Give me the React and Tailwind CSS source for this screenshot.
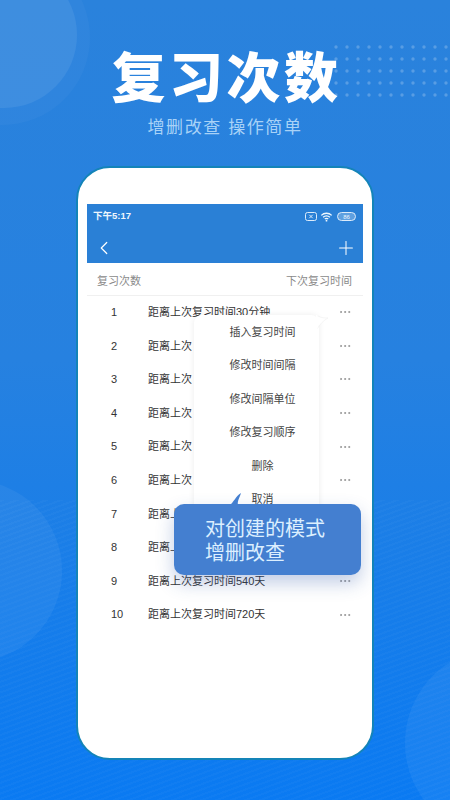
import { ChevronLeft, Plus, Ellipsis } from 'lucide-react';

const rows = [
  { n: 1, label: '距离上次复习时间30分钟' },
  { n: 2, label: '距离上次' },
  { n: 3, label: '距离上次' },
  { n: 4, label: '距离上次' },
  { n: 5, label: '距离上次' },
  { n: 6, label: '距离上次' },
  { n: 7, label: '距离上次' },
  { n: 8, label: '距离上次' },
  { n: 9, label: '距离上次复习时间540天' },
  { n: 10, label: '距离上次复习时间720天' },
];

const menu = ['插入复习时间', '修改时间间隔', '修改间隔单位', '修改复习顺序', '删除', '取消'];

function Dots() {
  const cols = Array.from({ length: 11 }, (_, i) => i);
  const lines = Array.from({ length: 5 }, (_, i) => i);
  return (
    <svg className="absolute left-[334px] top-[44px]" width="116" height="56" viewBox="0 0 116 56">
      {lines.map((y) =>
        cols.map((x) => (
          <circle key={`${x}-${y}`} cx={2 + x * 11} cy={3 + y * 12} r="1.7" fill="#ffffff" fillOpacity="0.22" />
        ))
      )}
    </svg>
  );
}

function StatusIcons() {
  return (
    <div className="flex items-center gap-[3px]">
      <svg width="12" height="9" viewBox="0 0 12 9" fill="none" stroke="#dcebfa" strokeWidth="1">
        <rect x="0.5" y="0.5" width="11" height="8" rx="2" />
        <path d="M4.3 2.8l3.4 3.4M7.7 2.8L4.3 6.2" />
      </svg>
      <svg width="13" height="10" viewBox="0 0 12 10" fill="none" stroke="#eef6fd" strokeWidth="1.3">
        <path d="M0.8 3.4a7.4 7.4 0 0 1 10.4 0M2.6 5.3a4.8 4.8 0 0 1 6.8 0M4.3 7a2.4 2.4 0 0 1 3.4 0" />
        <circle cx="6" cy="8.7" r="0.9" fill="#eef6fd" stroke="none" />
      </svg>
      <div className="ml-[1px] flex h-[9px] w-[19px] items-center justify-center rounded-[5px] border border-[#dcebfa] bg-white/25 text-[6px] leading-none text-[#eef6fd]">
        86
      </div>
    </div>
  );
}

export default function App() {
  return (
    <div className="relative h-[800px] w-[450px] overflow-hidden bg-[linear-gradient(180deg,#2a82dc_0%,#2681e0_45%,#0a7af2_100%)] font-['Liberation_Sans','Noto_Sans_CJK_SC',sans-serif]">
      {/* Background shapes */}
      <div className="absolute inset-x-0 bottom-0 h-[300px] bg-[repeating-linear-gradient(160deg,rgba(255,255,255,0.025)_0px,rgba(255,255,255,0.025)_2px,transparent_2px,transparent_5px)]" />
      <div className="absolute left-[-90px] top-[-50px] h-[175px] w-[180px] rounded-full bg-white/[0.03]" />
      <div className="absolute left-[-88px] top-[-38px] h-[146px] w-[165px] rounded-full bg-white/[0.07]" />
      <div className="absolute left-[-120px] top-[480px] h-[182px] w-[182px] rounded-full bg-white/5" />
      <div className="absolute left-[405px] top-[648px] h-[190px] w-[190px] rounded-full bg-white/5" />
      <Dots />

      {/* Heading */}
      <div className="relative flex flex-col items-center pt-[43px]">
        <h1 className="pl-[3px] text-[54px] font-black leading-[72px] tracking-[3.5px] text-white">复习次数</h1>
        <p className="mt-[1px] text-[17px] leading-[24px] tracking-[1.6px] text-[#a8d2f7]">增删改查 操作简单</p>
      </div>

      {/* Phone */}
      <div className="relative mx-[76px] mt-[26px] h-[594px] rounded-[34px] border-2 border-[#1484b8] bg-white px-[9px] pt-[36px]">
        <div className="h-[59px] bg-[#2a80d6] text-white">
          <div className="flex h-[25px] items-center justify-between pl-[6px] pr-[7px]">
            <span className="text-[9.5px] font-bold text-[#eef6fd]">下午5:17</span>
            <StatusIcons />
          </div>
          <div className="flex h-[34px] items-center justify-between pl-[6px] pr-[6px] pt-[4px]">
            <ChevronLeft size={22} strokeWidth={1.3} />
            <Plus size={22} strokeWidth={1.1} />
          </div>
        </div>

        <div className="flex h-[33px] items-center justify-between border-b border-[#f0f0f0] pl-[10px] pr-[11px] pt-[4px] text-[11px] text-[#8a8a8a]">
          <span>复习次数</span>
          <span>下次复习时间</span>
        </div>

        <div className="-mt-[0.5px]">
          {rows.map((row) => (
            <div key={row.n} className="flex h-[33.6px] items-center text-[11px] text-[#333333]">
              <span className="w-[61px] pl-[24px]">{row.n}</span>
              <span className="flex-1">{row.label}</span>
              <Ellipsis size={14} strokeWidth={1.4} className="mr-[11px] text-[#8c8c8c]" />
            </div>
          ))}
        </div>
      </div>

      {/* Popup menu */}
      <div className="absolute left-[194px] top-[315px] h-[200px] w-[125px] rounded-[8px] bg-white shadow-[0_0_6px_rgba(0,0,0,0.08)]">
        <svg className="absolute left-[122px] top-[0px]" width="13" height="14" viewBox="0 0 13 14">
          <path d="M0 1h2c3 2 7 2 10 2C8 5 4 9 1 14H0z" fill="#ffffff" stroke="#eeeeee" strokeWidth="0.6" />
          <path d="M0 0h1.5v14H0z" fill="#ffffff" />
        </svg>
        <div className="flex flex-col pl-[12px]">
          {menu.map((item) => (
            <div key={item} className="flex h-[33.5px] items-center justify-center text-[11px] text-[#444444]">
              {item}
            </div>
          ))}
        </div>
      </div>

      {/* Callout */}
      <div className="absolute left-[174px] top-[504px] h-[71px] w-[187px] rounded-[10px] bg-[#447fd0] pl-[31px] pt-[13px] text-[20px] leading-[24px] text-[#dcefff] shadow-[0_8px_18px_rgba(50,90,170,0.3)]">
        <svg className="absolute left-[56px] top-[-11px]" width="12" height="12" viewBox="0 0 12 12">
          <path d="M11 0C10 4 7 8 8 12H0C3 10 6 3 11 0z" fill="#447fd0" />
        </svg>
        <p>对创建的模式</p>
        <p>增删改查</p>
      </div>
    </div>
  );
}
